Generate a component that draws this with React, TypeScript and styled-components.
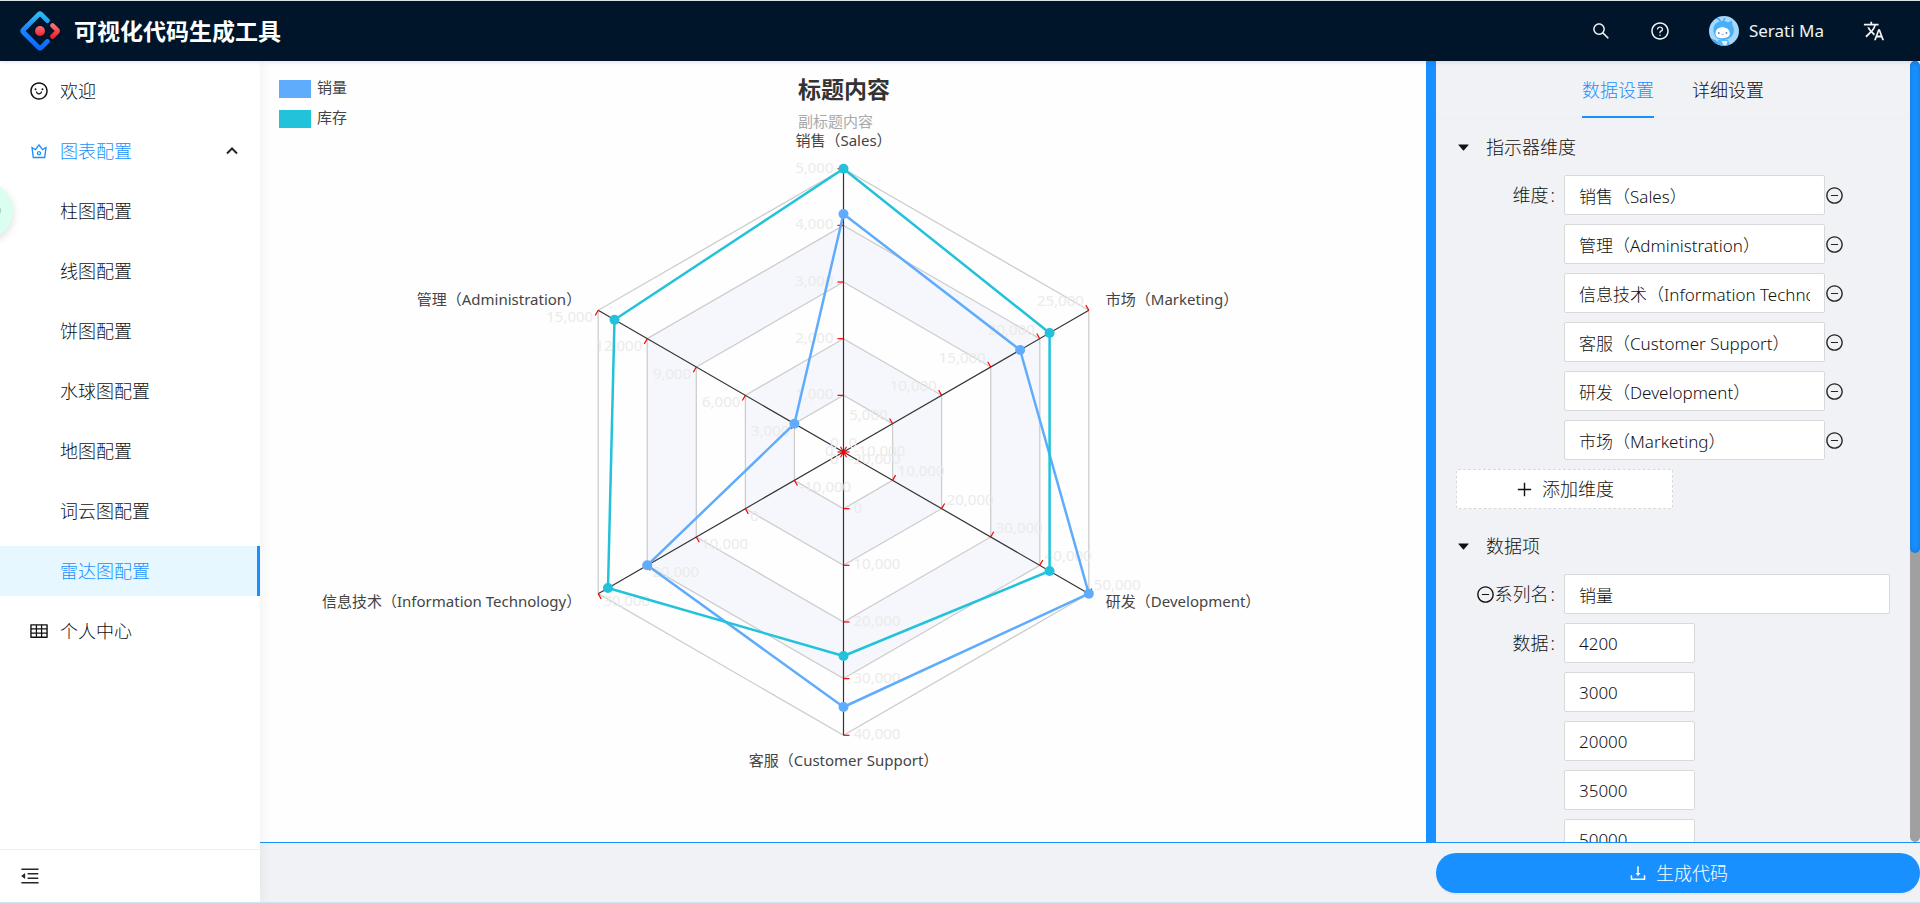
import React from 'react';
import styled, { createGlobalStyle, css } from 'styled-components';
import {
  AiFillCaretDown,
  AiOutlineCrown,
  AiOutlineDownload,
  AiOutlineMenuFold,
  AiOutlineMinusCircle,
  AiOutlinePlus,
  AiOutlineQuestionCircle,
  AiOutlineSearch,
  AiOutlineSmile,
  AiOutlineTable,
} from 'react-icons/ai';
import { MdTranslate } from 'react-icons/md';

const fontStack = '"Noto Sans", "Noto Sans CJK SC", sans-serif';
const blue = '#1890ff';

const GlobalStyle = createGlobalStyle`
  *, *::before, *::after { box-sizing: border-box; }
  body {
    margin: 0;
    color: #111;
    background: #f0f2f5;
    font-family: ${fontStack};
    font-size: 18px;
    font-weight: 300;
    line-height: 28px;
  }
  button, input { font: inherit; color: inherit; }
  button { padding: 0; border: 0; background: none; cursor: pointer; }
  a { color: inherit; text-decoration: none; }
  ul { margin: 0; padding: 0; list-style: none; }
  svg { display: block; flex: none; }
`;

const Page = styled.div`
  display: flex;
  flex-direction: column;
  height: 100vh;
  overflow: hidden;
  border-top: 1px solid #dbe1e4;
  border-bottom: 1px solid #cfe5ef;
`;

const Header = styled.header`
  position: relative;
  z-index: 2;
  display: flex;
  flex: none;
  align-items: center;
  justify-content: space-between;
  height: 60px;
  padding: 0 35px 0 20px;
  color: #fff;
  background: #001529;
  box-shadow: 0 1px 4px rgba(0, 21, 41, 0.12);
`;

const Brand = styled.a`
  display: flex;
  align-items: center;
  gap: 14px;
`;

const BrandName = styled.h1`
  margin: 0;
  font-size: 23px;
  font-weight: 700;
  line-height: 40px;
`;

const HeaderActions = styled.div`
  display: flex;
  align-items: center;
  gap: 39px;
`;

const HeaderButton = styled.button`
  display: flex;
  align-items: center;
  gap: 10px;
  color: #f2f4f5;
  font-size: 17px;
  font-weight: 400;
`;

const Body = styled.div`
  display: flex;
  flex: 1;
  min-height: 0;
`;

const Sider = styled.nav`
  position: relative;
  z-index: 1;
  display: flex;
  flex: none;
  flex-direction: column;
  width: 260px;
  background: #fff;
  box-shadow: 2px 0 10px rgba(29, 35, 41, 0.06);
`;

const Menu = styled.ul`
  display: flex;
  flex: 1;
  flex-direction: column;
  gap: 10px;
  padding-top: 5px;
`;

const SubMenu = styled.ul`
  display: flex;
  flex-direction: column;
  gap: 10px;
  padding-top: 10px;
`;

const MenuLink = styled.a<{ $nested?: boolean; $tone?: 'open' | 'selected' }>`
  display: flex;
  align-items: center;
  gap: 11px;
  height: 50px;
  padding: 0 22px 0 ${(p) => (p.$nested ? 60 : 29)}px;
  color: ${(p) => (p.$tone ? blue : 'inherit')};
  ${(p) =>
    p.$tone === 'selected' &&
    css`
      background: #e6f7ff;
      border-right: 3px solid ${blue};
    `}
`;

const MenuText = styled.span`
  flex: 1;
`;

const SiderFooter = styled.div`
  display: flex;
  align-items: center;
  height: 53px;
  padding-left: 19px;
  border-top: 1px solid #f0f0f0;
`;

const IconButton = styled.button`
  display: flex;
  align-items: center;
  flex: none;
  color: #262626;
`;

const Main = styled.main`
  display: flex;
  flex: 1;
  flex-direction: column;
  min-width: 0;
`;

const Workspace = styled.div`
  display: flex;
  flex: 1;
  min-height: 0;
`;

const ChartPane = styled.section`
  flex: 1;
  min-width: 0;
  background: #fefefe;

  svg {
    width: 100%;
    height: 100%;
  }
`;

const Splitter = styled.div`
  flex: none;
  width: 10px;
  background: ${blue};
`;

const SettingsPane = styled.aside`
  display: flex;
  flex: none;
  width: 484px;
`;

const Settings = styled.div`
  flex: 1;
  min-width: 0;
  overflow: hidden;
`;

const ScrollTrack = styled.div`
  flex: none;
  width: 10px;
  border-radius: 5px;
  background: #a0a0a0;
`;

const ScrollThumb = styled.div`
  height: 63%;
  border-radius: 5px;
  background: ${blue};
  box-shadow: inset 0 0 5px rgba(0, 0, 0, 0.2);
`;

const Tabs = styled.div`
  display: flex;
  justify-content: center;
  gap: 38px;
  height: 58px;
  border-bottom: 1px solid #edeff1;
`;

const Tab = styled.button<{ $active?: boolean }>`
  height: 57px;
  padding-top: 2px;
  color: ${(p) => (p.$active ? blue : 'inherit')};
  border-bottom: 2px solid ${(p) => (p.$active ? blue : 'transparent')};
`;

const Group = styled.section`
  display: flex;
  flex-direction: column;
  gap: 9px;
  padding: 0 20px 9px;
`;

const GroupHeader = styled.button`
  display: flex;
  align-items: center;
  gap: 15px;
  height: 56px;
  margin-bottom: -9px;
  text-align: left;
`;

const Row = styled.div`
  display: flex;
  align-items: center;
  height: 40px;
`;

const RowLabel = styled.label`
  display: flex;
  align-items: center;
  justify-content: flex-end;
  flex: none;
  width: 108px;
  padding-right: 9px;
  white-space: nowrap;
`;

const Colon = styled.span`
  margin-left: 2px;
`;

const fieldWidths = { small: '131px', medium: '261px', full: '326px' };

const Field = styled.input<{ $size: keyof typeof fieldWidths }>`
  width: ${(p) => fieldWidths[p.$size]};
  height: 40px;
  padding: 0 14px;
  font-size: 17px;
  border: 1px solid #d9d9d9;
  border-radius: 2px;
  background: #fff;
`;

const DashedButton = styled.button`
  display: flex;
  align-items: center;
  justify-content: center;
  gap: 8px;
  width: 217px;
  height: 40px;
  border: 1px dashed #d9d9d9;
  border-radius: 2px;
  background: #fff;
`;

const ActionBar = styled.footer`
  display: flex;
  flex: none;
  align-items: flex-start;
  justify-content: flex-end;
  height: 60px;
  padding-top: 10px;
  border-top: 1px solid ${blue};
`;

const PrimaryButton = styled.button`
  display: flex;
  align-items: center;
  justify-content: center;
  gap: 8px;
  width: 484px;
  height: 40px;
  color: #fff;
  border-radius: 20px;
  background: ${blue};
  box-shadow: 0 2px 0 rgba(0, 0, 0, 0.04);
`;

const FloatingBubble = styled.button`
  position: absolute;
  z-index: 3;
  top: 183px;
  left: -43px;
  width: 56px;
  height: 56px;
  border-radius: 50%;
  background: #dafff1;
  box-shadow: 0 3px 8px rgba(0, 0, 0, 0.14);

  &::after {
    content: '';
    position: absolute;
    top: 22px;
    right: 12px;
    width: 10px;
    height: 11px;
    border-radius: 5px;
    background: #b4c8c0;
  }
`;

const ChartText = styled.text<{ $size?: number; $weight?: number; $fill?: string }>`
  font-family: ${fontStack};
  font-size: ${(p) => p.$size ?? 15}px;
  font-weight: ${(p) => p.$weight ?? 400};
  fill: ${(p) => p.$fill ?? '#444'};
`;

function Logo() {
  return (
    <svg width="40" height="40" viewBox="0 0 40 40" aria-hidden="true">
      <defs>
        <linearGradient id="logoBlue" x1="0" y1="0" x2="0" y2="1">
          <stop offset="0" stopColor="#29bdf0" />
          <stop offset="0.4" stopColor="#1a8cff" />
          <stop offset="1" stopColor="#0d68ff" />
        </linearGradient>
        <linearGradient id="logoRed" x1="0" y1="0" x2="0" y2="1">
          <stop offset="0" stopColor="#fa6e73" />
          <stop offset="1" stopColor="#f5222d" />
        </linearGradient>
      </defs>
      <path
        d="M27.4 9.6 21.2 3.4Q20 2.200 18.8 3.4L3.400 18.8Q2.200 20 3.400 21.2L18.8 36.6Q20 37.800 21.2 36.6L27.4 30.4"
        fill="none"
        stroke="url(#logoBlue)"
        strokeWidth="4.8"
        strokeLinecap="round"
      />
      <path
        d="m32.6 14.6 4.3 4.3q1 1.1 0 2.2l-4.3 4.3"
        fill="none"
        stroke="url(#logoRed)"
        strokeWidth="4.8"
        strokeLinecap="round"
      />
      <circle cx="20" cy="20" r="4.9" fill="url(#logoRed)" />
    </svg>
  );
}

function Avatar() {
  return (
    <svg width="30" height="30" viewBox="0 0 30 30" aria-hidden="true">
      <defs>
        <clipPath id="avatarClip">
          <circle cx="15" cy="15" r="15" />
        </clipPath>
      </defs>
      <g clipPath="url(#avatarClip)">
        <rect width="30" height="30" fill="#a5d8fb" />
        <path d="M9 24h10l3 6H8z" fill="#5cb3f7" />
        <path d="M3 23q5 1 6 4l-1 3H3z" fill="#3fa4f5" />
        <path d="M12.5 25h6l-1 4h-3z" fill="#d8effd" />
        <path d="M7 2.5q3-.5 4.500 3M16 2q-1 1-1.500 3" fill="none" stroke="#3f9df0" strokeWidth="1.200" />
        <path d="M4.500 14.500C4 8.500 8.500 5 13.500 5c2.500 0 4 .5 5.500 1.500l4-2 .5 5c1.500 2 1.700 4 1.200 6.500-.8 4.500-5 8-10.700 8S5 20.500 4.500 14.500z" fill="#47b0f8" />
        <path d="M6.500 17.500c0-4 3.200-6.200 6.700-6.200 4.200 0 7.600 2.200 7.600 6 0 3.300-3 4.900-7.200 4.900s-7.100-1.200-7.100-4.700z" fill="#fff" />
        <circle cx="9.800" cy="17" r="0.900" fill="#6a7fae" />
        <circle cx="17.500" cy="17" r="0.900" fill="#6a7fae" />
        <path d="M12.600 18.200q1 .8 2 0" fill="none" stroke="#6a7fae" strokeWidth="0.800" />
      </g>
    </svg>
  );
}

const axes = [
  { name: '销售（Sales）', min: 0, max: 5000 },
  { name: '管理（Administration）', min: 0, max: 15000 },
  { name: '信息技术（Information Technology）', min: -20000, max: 30000 },
  { name: '客服（Customer Support）', min: -10000, max: 40000 },
  { name: '研发（Development）', min: 0, max: 50000 },
  { name: '市场（Marketing）', min: 0, max: 25000 },
];

const series = [
  { name: '销量', color: '#60acfc', values: [4200, 3000, 20000, 35000, 50000, 18000] },
  { name: '库存', color: '#23c2db', values: [5000, 14000, 28000, 26000, 42000, 21000] },
];

const chart = { width: 1166, height: 781, cx: 583.5, cy: 391, radius: 283.3 };
const splits = 5;

const nameLayout: { dx: number; dy: number; anchor: 'start' | 'middle' | 'end' }[] = [
  { dx: 0, dy: -23, anchor: 'middle' },
  { dx: -17, dy: -5, anchor: 'end' },
  { dx: -17, dy: 13, anchor: 'end' },
  { dx: 0, dy: 31, anchor: 'middle' },
  { dx: 17, dy: 13, anchor: 'start' },
  { dx: 17, dy: -5, anchor: 'start' },
];

function direction(axis: number) {
  const angle = Math.PI / 2 + (axis * Math.PI) / 3;
  return { x: Math.cos(angle), y: -Math.sin(angle) };
}

function pointAt(axis: number, ratio: number) {
  const d = direction(axis);
  return { x: chart.cx + d.x * chart.radius * ratio, y: chart.cy + d.y * chart.radius * ratio };
}

function polygon(ratios: number[]) {
  return ratios
    .map((ratio, i) => {
      const p = pointAt(i, ratio);
      return `${p.x.toFixed(1)},${p.y.toFixed(1)}`;
    })
    .join(' ');
}

function RadarChart() {
  const rings = [5, 4, 3, 2, 1];
  return (
    <svg viewBox={`0 0 ${chart.width} ${chart.height}`} role="img" aria-label="标题内容">
      {rings.map((ring) => (
        <polygon
          key={ring}
          points={polygon(axes.map(() => ring / splits))}
          fill={ring % 2 === 0 ? '#f6f7fc' : '#fefefe'}
          stroke="#ccc"
          strokeWidth="1.250"
        />
      ))}
      {axes.map((axis, i) => {
        const end = pointAt(i, 1);
        return <line key={axis.name} x1={chart.cx} y1={chart.cy} x2={end.x} y2={end.y} stroke="#333" strokeWidth="1.200" />;
      })}
      {axes.map((axis, i) => {
        const d = direction(i);
        const normal = { x: d.y, y: -d.x };
        const side = Math.abs(normal.y) < 0.01 ? 0 : Math.sign(normal.y);
        return Array.from({ length: splits + 1 }, (_, step) => {
          const p = pointAt(i, step / splits);
          const value = axis.min + ((axis.max - axis.min) * step) / splits;
          return (
            <g key={`${axis.name}-${step}`}>
              <line x1={p.x} y1={p.y} x2={p.x + normal.x * 6} y2={p.y + normal.y * 6} stroke="#f00" strokeWidth="1.200" />
              <ChartText
                x={p.x + normal.x * 10}
                y={p.y + side * 8 + 4}
                textAnchor={normal.x < 0 ? 'end' : 'start'}
                $fill="#ebebeb"
              >
                {value.toLocaleString('en-US')}
              </ChartText>
            </g>
          );
        });
      })}
      {axes.map((axis, i) => {
        const p = pointAt(i, 1);
        const layout = nameLayout[i];
        return (
          <ChartText key={axis.name} x={p.x + layout.dx} y={p.y + layout.dy} textAnchor={layout.anchor}>
            {axis.name}
          </ChartText>
        );
      })}
      {series.map((item) => {
        const ratios = item.values.map((v, i) => (v - axes[i].min) / (axes[i].max - axes[i].min));
        return (
          <g key={item.name}>
            <polygon points={polygon(ratios)} fill="none" stroke={item.color} strokeWidth="2.500" strokeLinejoin="bevel" />
            {ratios.map((ratio, i) => {
              const p = pointAt(i, ratio);
              return <circle key={axes[i].name} cx={p.x} cy={p.y} r="5" fill={item.color} />;
            })}
          </g>
        );
      })}
      {series.map((item, i) => (
        <g key={item.name}>
          <rect x="19" y={19 + i * 30} width="32" height="18" fill={item.color} />
          <ChartText x="57" y={32 + i * 30}>
            {item.name}
          </ChartText>
        </g>
      ))}
      <ChartText x="538" y="37" $size={23} $weight={700} $fill="#333">
        标题内容
      </ChartText>
      <ChartText x="538" y="66" $fill="#aaa">
        副标题内容
      </ChartText>
    </svg>
  );
}

const chartPages = ['柱图配置', '线图配置', '饼图配置', '水球图配置', '地图配置', '词云图配置', '雷达图配置'];

function SideMenu() {
  return (
    <Sider aria-label="主菜单">
      <Menu>
        <li>
          <MenuLink href="#welcome">
            <AiOutlineSmile size={20} />
            <MenuText>欢迎</MenuText>
          </MenuLink>
        </li>
        <li>
          <MenuLink href="#charts" $tone="open">
            <AiOutlineCrown size={20} />
            <MenuText>图表配置</MenuText>
            <svg width="12" height="8" viewBox="0 0 12 8" fill="none" stroke="#262626" strokeWidth="2">
              <path d="m1 6.500 5-5 5 5" />
            </svg>
          </MenuLink>
          <SubMenu>
            {chartPages.map((label) => (
              <li key={label}>
                <MenuLink href={`#${label}`} $nested $tone={label === '雷达图配置' ? 'selected' : undefined}>
                  <MenuText>{label}</MenuText>
                </MenuLink>
              </li>
            ))}
          </SubMenu>
        </li>
        <li>
          <MenuLink href="#profile">
            <AiOutlineTable size={20} />
            <MenuText>个人中心</MenuText>
          </MenuLink>
        </li>
      </Menu>
      <SiderFooter>
        <IconButton type="button" aria-label="收起菜单">
          <AiOutlineMenuFold size={22} />
        </IconButton>
      </SiderFooter>
    </Sider>
  );
}

function SettingsForm() {
  return (
    <Settings>
      <Tabs role="tablist">
        <Tab type="button" role="tab" aria-selected $active>
          数据设置
        </Tab>
        <Tab type="button" role="tab" aria-selected={false}>
          详细设置
        </Tab>
      </Tabs>
      <Group>
        <GroupHeader type="button" aria-expanded>
          <AiFillCaretDown size={15} />
          指示器维度
        </GroupHeader>
        {axes.map((axis, i) => (
          <Row key={axis.name}>
            <RowLabel htmlFor={`dimension-${i}`}>
              {i === 0 && (
                <>
                  维度<Colon>:</Colon>
                </>
              )}
            </RowLabel>
            <Field id={`dimension-${i}`} $size="medium" type="text" defaultValue={axis.name} aria-label={`维度 ${i + 1}`} />
            <IconButton type="button" aria-label="删除维度">
              <AiOutlineMinusCircle size={19} />
            </IconButton>
          </Row>
        ))}
        <DashedButton type="button">
          <AiOutlinePlus size={19} />
          添加维度
        </DashedButton>
      </Group>
      <Group>
        <GroupHeader type="button" aria-expanded>
          <AiFillCaretDown size={15} />
          数据项
        </GroupHeader>
        <Row>
          <RowLabel htmlFor="series-name">
            <AiOutlineMinusCircle size={19} />
            系列名<Colon>:</Colon>
          </RowLabel>
          <Field id="series-name" $size="full" type="text" defaultValue={series[0].name} />
        </Row>
        {series[0].values.map((value, i) => (
          <Row key={axes[i].name}>
            <RowLabel htmlFor={`value-${i}`}>
              {i === 0 && (
                <>
                  数据<Colon>:</Colon>
                </>
              )}
            </RowLabel>
            <Field id={`value-${i}`} $size="small" type="text" defaultValue={value} aria-label={`数据 ${i + 1}`} />
          </Row>
        ))}
      </Group>
    </Settings>
  );
}

export default function App() {
  return (
    <Page>
      <GlobalStyle />
      <Header>
        <Brand href="#home">
          <Logo />
          <BrandName>可视化代码生成工具</BrandName>
        </Brand>
        <HeaderActions>
          <HeaderButton type="button" aria-label="搜索">
            <AiOutlineSearch size={20} />
          </HeaderButton>
          <HeaderButton type="button" aria-label="帮助">
            <AiOutlineQuestionCircle size={20} />
          </HeaderButton>
          <HeaderButton type="button">
            <Avatar />
            Serati Ma
          </HeaderButton>
          <HeaderButton type="button" aria-label="语言">
            <MdTranslate size={22} />
          </HeaderButton>
        </HeaderActions>
      </Header>
      <Body>
        <SideMenu />
        <Main>
          <Workspace>
            <ChartPane>
              <RadarChart />
            </ChartPane>
            <Splitter />
            <SettingsPane>
              <SettingsForm />
              <ScrollTrack>
                <ScrollThumb />
              </ScrollTrack>
            </SettingsPane>
          </Workspace>
          <ActionBar>
            <PrimaryButton type="button">
              <AiOutlineDownload size={20} />
              生成代码
            </PrimaryButton>
          </ActionBar>
        </Main>
      </Body>
      <FloatingBubble type="button" aria-label="助手" />
    </Page>
  );
}
